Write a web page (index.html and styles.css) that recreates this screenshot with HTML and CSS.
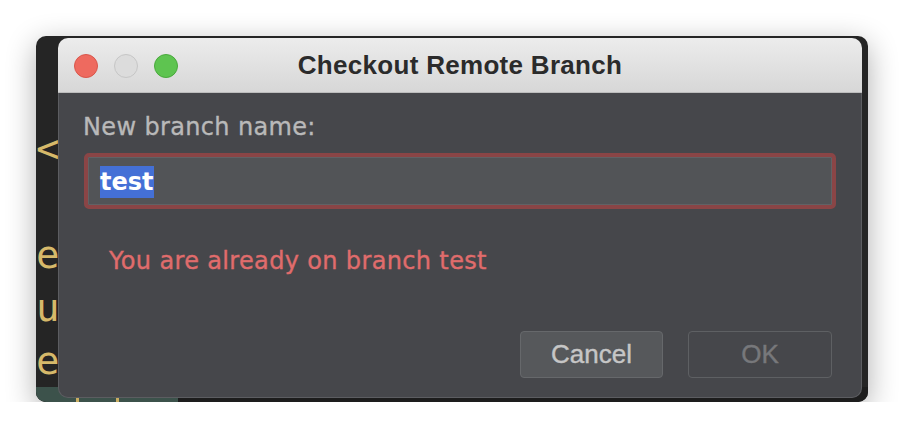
FILE: index.html
```html
<!DOCTYPE html>
<html lang="en">
<head>
<meta charset="utf-8">
<title>Checkout Remote Branch</title>
<link rel="stylesheet" href="styles.css">
</head>
<body>
<div class="screen">
  <div class="editor">
    <div class="code">
      <div class="line">&lt;</div>
      <div class="line"></div>
      <div class="line">e</div>
      <div class="line">u</div>
      <div class="line">e</div>
      <div class="line line-current"><span class="sel"><span class="tick"></span><span class="tick"></span></span></div>
    </div>
    <div class="dialog">
      <div class="titlebar">
        <div class="lights">
          <span class="light light-close"></span>
          <span class="light light-min"></span>
          <span class="light light-max"></span>
        </div>
        <div class="title">Checkout Remote Branch</div>
        <div></div>
      </div>
      <div class="body">
        <div class="label">New branch name:</div>
        <div class="field"><span class="selected">test</span></div>
        <div class="error">You are already on branch test</div>
        <div class="buttons">
          <button class="btn btn-cancel">Cancel</button>
          <button class="btn btn-ok">OK</button>
        </div>
      </div>
    </div>
  </div>
</div>
</body>
</html>
```

FILE: styles.css
```css
html, body {
  margin: 0;
  padding: 0;
  background: #ffffff;
}

.screen {
  padding: 36px 0 0 36px;
}

.editor {
  position: relative;
  width: 832px;
  height: 366px;
  border-radius: 10px;
  background: #252525;
  overflow: hidden;
  box-shadow: 0 8px 30px rgba(0, 0, 0, 0.32);
}

.code {
  padding-top: 85.5px;
  font-family: "DejaVu Sans Mono", monospace;
  font-size: 39px;
  line-height: 53px;
  color: #d6b96a;
}

.line {
  height: 53px;
  white-space: pre;
}

.line-current {
  background: #1d1d1d;
}

.sel {
  display: flex;
  gap: 37px;
  width: 142px;
  height: 53px;
  box-sizing: border-box;
  padding: 11px 0 0 40px;
  background: #3c524b;
}

.tick {
  width: 3px;
  height: 6px;
  background: #c9ad62;
}

.dialog {
  position: absolute;
  left: 22px;
  top: 2px;
  width: 804px;
  display: flex;
  flex-direction: column;
}

.titlebar {
  height: 54px;
  display: grid;
  grid-template-columns: 1fr auto 1fr;
  align-items: center;
  background: linear-gradient(#ececec, #d7d7d7);
  border-bottom: 1px solid #bdbdbd;
  border-radius: 10px 10px 0 0;
}

.lights {
  display: flex;
  gap: 16px;
  padding-left: 16px;
  padding-top: 2px;
}

.light {
  width: 22px;
  height: 22px;
  border-radius: 50%;
  border: 1px solid;
}

.light-close {
  background: #ee6a5f;
  border-color: #d9564b;
}

.light-min {
  background: #dcdcdc;
  border-color: #c6c6c6;
}

.light-max {
  background: #5ec450;
  border-color: #49a93c;
}

.title {
  font-family: "Liberation Sans", Arial, sans-serif;
  font-weight: bold;
  font-size: 26px;
  letter-spacing: 0.3px;
  color: #2b2b2b;
}

.body {
  background: #46474b;
  border: 1px solid #5c5d61;
  border-top: none;
  border-radius: 0 0 10px 10px;
  padding: 20px 25px 19px 25px;
  display: flex;
  flex-direction: column;
  font-family: "DejaVu Sans", sans-serif;
  font-size: 24px;
  line-height: 28px;
  letter-spacing: 0.35px;
}

.label {
  color: #b9b9b9;
  margin-left: -1px;
  -webkit-text-stroke: 0.35px #b9b9b9;
}

.field {
  margin-top: 12px;
  height: 56px;
  box-sizing: border-box;
  border: 4px solid #8a4546;
  border-radius: 5px;
  background: #525457;
  box-shadow: inset 0 0 0 1px #616265;
  display: flex;
  align-items: center;
  padding-left: 12px;
  padding-top: 2px;
}

.selected {
  display: inline-block;
  line-height: 32px;
  height: 32px;
  background: #4470d6;
  color: #ffffff;
  font-weight: bold;
  letter-spacing: 0;
}

.error {
  margin-top: 38px;
  padding-left: 25px;
  color: #e06c6c;
  -webkit-text-stroke: 0.35px #e06c6c;
}

.buttons {
  margin-top: 56px;
  display: flex;
  justify-content: flex-end;
  gap: 25px;
  padding-right: 4px;
}

.btn {
  width: 144px;
  height: 47px;
  box-sizing: border-box;
  border-radius: 4px;
  font-family: "Liberation Sans", Arial, sans-serif;
  font-size: 26px;
  padding: 0;
}

.btn-cancel {
  width: 143px;
  background: #56585b;
  border: 1px solid #66686b;
  color: #c6c6c6;
  -webkit-text-stroke: 0.4px #c6c6c6;
}

.btn-ok {
  background: transparent;
  border: 1px solid #5e6063;
  color: #77787b;
  -webkit-text-stroke: 0.4px #77787b;
}
```
